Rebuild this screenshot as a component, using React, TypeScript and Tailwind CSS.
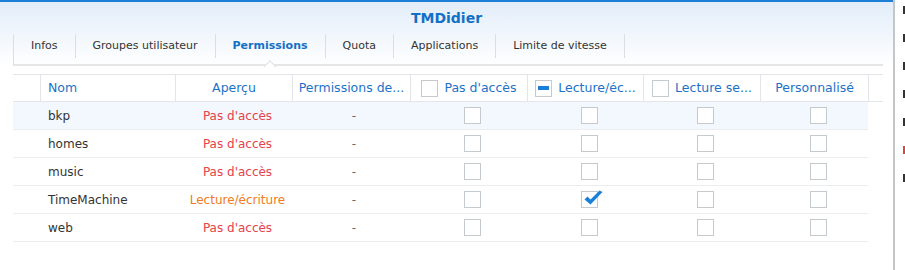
import React from "react";

const tabs = ["Infos", "Groupes utilisateur", "Permissions", "Quota", "Applications", "Limite de vitesse"];

const rows = [
    { name: "bkp", preview: "Pas d'accès", rw: false },
    { name: "homes", preview: "Pas d'accès", rw: false },
    { name: "music", preview: "Pas d'accès", rw: false },
    { name: "TimeMachine", preview: "Lecture/écriture", rw: true },
    { name: "web", preview: "Pas d'accès", rw: false },
];

function Box({ checked = false, partial = false }: { checked?: boolean; partial?: boolean }) {
    return (
        <span className="relative inline-flex h-[17px] w-[17px] shrink-0 items-center justify-center border border-[#c5cacf] bg-white">
            {partial && <span className="h-[4px] w-[11px] bg-[#1a7fd8]" />}
            {checked && (
                <svg className="absolute -top-[3px] left-[1px]" width="20" height="18" viewBox="0 0 20 18">
                    <path d="M1.5 10.5 L4.5 7.5 L7.5 10.5 L16.5 1.5 L19.5 3 L7.5 15.5 Z" fill="#1a7fd8" />
                </svg>
            )}
        </span>
    );
}

const cols = ["w-[27px]", "w-[135px]", "w-[117px]", "w-[118px]", "w-[117px]", "w-[116px]", "w-[117px]", "w-[108px]"];

export default function App() {
    return (
        <div className="flex h-[270px] w-[905px] overflow-hidden bg-white font-['DejaVu_Sans',sans-serif]">
            <div className="flex w-[893px] shrink-0 flex-col border-t-2 border-[#1b7fd6] bg-gradient-to-b from-[#e2edf9] via-white via-[24%] to-white">
                <div className="flex h-[32px] items-center justify-center text-[14px] font-bold text-[#1470c6]">TMDidier</div>
                <div className="ml-[13px] mr-[10px] flex h-[32px] border-b-2 border-l border-[#e4e6e8] border-l-[#dcdfe2]">
                    <div className="relative flex h-[24px] items-center">
                        {tabs.map((t) => (
                            <div key={t} className="relative flex h-full items-center border-r border-[#dcdfe2] px-[17px] text-[11px] text-[#333]">
                                <span className={t === "Permissions" ? "font-bold text-[#1470c6]" : ""}>{t}</span>
                                {t === "Permissions" && (
                                    <span className="absolute left-1/2 top-[28px] h-[9px] w-[9px] -translate-x-1/2 rotate-45 border-l border-t border-[#dcdfe2] bg-white" />
                                )}
                            </div>
                        ))}
                    </div>
                </div>
                <div className="ml-[13px] mr-[10px] mt-[8px]">
                    <div className="flex h-[28px] border-y border-[#e3e5e8] text-[12.5px] text-[#1c72c8]">
                        <div className={`${cols[0]}`} />
                        <div className={`${cols[1]} flex items-center border-l border-[#e3e5e8] pl-[7px]`}>Nom</div>
                        <div className={`${cols[2]} flex items-center justify-center border-l border-[#e3e5e8]`}>Aperçu</div>
                        <div className={`${cols[3]} flex items-center justify-center border-l border-[#e3e5e8]`}>Permissions de...</div>
                        <div className={`${cols[4]} flex items-center justify-center gap-[6px] border-l border-[#e3e5e8]`}>
                            <Box />Pas d'accès
                        </div>
                        <div className={`${cols[5]} flex items-center justify-center gap-[6px] border-l border-[#e3e5e8]`}>
                            <Box partial />Lecture/éc...
                        </div>
                        <div className={`${cols[6]} flex items-center justify-center gap-[6px] border-l border-[#e3e5e8]`}>
                            <Box />Lecture se...
                        </div>
                        <div className={`${cols[7]} flex items-center justify-center border-l border-[#e3e5e8]`}>Personnalisé</div>
                        <div className="flex-1 border-l border-[#e3e5e8]" />
                    </div>
                    <div className="w-[855px]">
                        {rows.map((r, i) => (
                            <div key={r.name} className={`flex h-[28px] items-center border-b border-[#ebedef] text-[12px] ${i === 0 ? "bg-[#f2f8fd]" : ""}`}>
                                <div className={cols[0]} />
                                <div className={`${cols[1]} pl-[8px] text-[#333]`}>{r.name}</div>
                                <div className={`${cols[2]} pl-[8px] text-center ${r.rw ? "text-[#ee7b22]" : "text-[#e6424b]"}`}>{r.preview}</div>
                                <div className={`${cols[3]} pl-[6px] text-center text-[#666]`}>-</div>
                                <div className={`${cols[4]} flex justify-center pl-[8px]`}><Box /></div>
                                <div className={`${cols[5]} flex justify-center pl-[8px]`}><Box checked={r.rw} /></div>
                                <div className={`${cols[6]} flex justify-center pl-[8px]`}><Box /></div>
                                <div className={`${cols[7]} flex justify-center pl-[8px]`}><Box /></div>
                            </div>
                        ))}
                    </div>
                </div>
            </div>
            <div className="flex flex-1 flex-col border-l-2 border-[#c4c7ca] pl-[8px] pt-[6px]">
                {["#333", "#333", "#333", "#333", "#333", "#d9453f", "#333"].map((c, i) => (
                    <span key={i} className="mb-[20px] h-[8px] w-[2px]" style={{ backgroundColor: c }} />
                ))}
            </div>
        </div>
    );
}
